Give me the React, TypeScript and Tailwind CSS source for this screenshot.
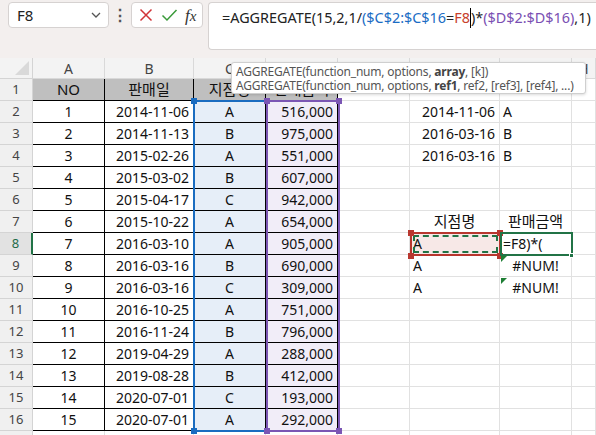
import React from "react";

const FONT = "font-['Noto_Sans','Noto_Sans_CJK_KR',sans-serif]";

const table = [
  ["1", "2014-11-06", "A", "516,000"],
  ["2", "2014-11-13", "B", "975,000"],
  ["3", "2015-02-26", "A", "551,000"],
  ["4", "2015-03-02", "B", "607,000"],
  ["5", "2015-04-17", "C", "942,000"],
  ["6", "2015-10-22", "A", "654,000"],
  ["7", "2016-03-10", "A", "905,000"],
  ["8", "2016-03-16", "B", "690,000"],
  ["9", "2016-03-16", "C", "309,000"],
  ["10", "2016-10-25", "A", "751,000"],
  ["11", "2016-11-24", "B", "796,000"],
  ["12", "2019-04-29", "A", "288,000"],
  ["13", "2019-08-28", "B", "412,000"],
  ["14", "2020-07-01", "C", "193,000"],
  ["15", "2020-07-01", "A", "292,000"],
];

// F / G column content by row number
const side: Record<number, [string, string, "rl" | "cc" | "ll" | "lc"]> = {
  2: ["2014-11-06", "A", "rl"],
  3: ["2016-03-16", "B", "rl"],
  4: ["2016-03-16", "B", "rl"],
  7: ["지점명", "판매금액", "cc"],
  8: ["A", "=F8)*(", "ll"],
  9: ["A", "#NUM!", "lc"],
  10: ["A", "#NUM!", "lc"],
};

const colLetters = ["A", "B", "C", "D", "E", "F", "G", "H"];

function Cell({
  children,
  align = "left",
  className = "",
}: {
  children?: React.ReactNode;
  align?: "left" | "center" | "right";
  className?: string;
}) {
  const a =
    align === "center" ? "justify-center" : align === "right" ? "justify-end pr-[4px]" : "justify-start pl-[3px]";
  return (
    <div className={`h-[22px] flex items-center overflow-hidden whitespace-nowrap border-r border-b text-[14px] text-[#111] leading-none ${a} ${className}`}>
      {children}
    </div>
  );
}

function Handle({ className }: { className: string }) {
  return <div className={`absolute w-[6px] h-[6px] ${className}`} />;
}

function TopBar() {
  return (
    <div className="h-[58px] bg-[#f3efee] flex items-start pt-[2px] pl-[8px]">
      <div className="shrink-0 w-[101px] h-[26px] bg-white border border-[#d6d2d1] rounded-[4px] flex items-center pl-[8px] pr-[6px] justify-between">
        <span className="text-[15px] text-[#222]">F8</span>
        <svg width="12" height="12" viewBox="0 0 12 12">
          <path d="M2 4 L6 8 L10 4" fill="none" stroke="#555" strokeWidth="1.3" />
        </svg>
      </div>
      <div className="shrink-0 w-[22px] h-[26px] flex items-center justify-center text-[#555] text-[16px] font-bold">⋮</div>
      <div className="shrink-0 w-[72px] h-[26px] bg-white border border-[#d6d2d1] rounded-[4px] flex items-center justify-around px-[2px]">
        <svg width="16" height="16" viewBox="0 0 16 16">
          <path d="M2.5 2.5 L13.5 13.5 M13.5 2.5 L2.5 13.5" stroke="#d13438" strokeWidth="1.5" />
        </svg>
        <svg width="17" height="16" viewBox="0 0 17 16">
          <path d="M1.5 8.5 L6 13 L15.5 3" fill="none" stroke="#3a9a3a" strokeWidth="1.5" />
        </svg>
        <span className="font-['Liberation_Serif',serif] italic text-[17px] text-[#333] leading-none">
          f<span className="text-[15px]">x</span>
        </span>
      </div>
      <div className="ml-[5px] min-w-0 flex-1 h-[48px] bg-white border border-r-0 border-[#d6d2d1] rounded-l-[4px] pl-[13px] pt-[4px] text-[14.4px] text-[#222] whitespace-nowrap overflow-hidden">
        =AGGREGATE(15,2,1/<span className="text-[#1a6cc4]">($C$2:$C$16</span>=<span className="text-[#c8402c]">F8</span>
        <span className="inline-block w-[1px] h-[20px] bg-black align-middle -mt-[2px]" />)*
        <span className="text-[#7a4fb3]">($D$2:$D$16)</span>,1)
      </div>
    </div>
  );
}

function Sheet() {
  const rows: React.ReactNode[] = [];
  // column header row
  rows.push(
    <div key="corner" className="h-[21px] bg-[#f3f3f3] border-r border-b border-[#d4d4d4] flex items-end justify-end p-[3px]">
      <svg width="14" height="14" viewBox="0 0 14 14">
        <polygon points="14,0 14,14 0,14" fill="#d9d9d9" />
      </svg>
    </div>
  );
  colLetters.forEach((c) =>
    rows.push(
      <div key={"h" + c} className="h-[21px] bg-[#f3f3f3] border-r border-b border-[#d9d9d9] flex items-center justify-center text-[14px] text-[#444]">
        {c}
      </div>
    )
  );

  for (let r = 1; r <= 17; r++) {
    const active = r === 8;
    rows.push(
      <div
        key={"r" + r}
        className={`h-[22px] flex items-center justify-center text-[13px] border-b border-[#d4d4d4] ${
          active ? "bg-[#e2e2e2] text-[#1e6b4a] border-r-2 border-r-[#217346]" : "bg-[#f0f0f0] text-[#444] border-r"
        }`}
      >
        {r <= 16 ? r : ""}
      </div>
    );
    // A-D
    if (r === 1) {
      ["NO", "판매일", "지점명", "판매금액"].forEach((t, i) =>
        rows.push(
          <Cell key={"t1" + i} align="center" className="bg-[#bfbfbf] border-black text-[15px]">
            {t}
          </Cell>
        )
      );
    } else if (r <= 16) {
      const d = table[r - 2];
      rows.push(<Cell key={"a" + r} align="center" className="border-black">{d[0]}</Cell>);
      rows.push(<Cell key={"b" + r} align="right" className="border-black">{d[1]}</Cell>);
      rows.push(<Cell key={"c" + r} align="center" className="border-black bg-[#e6eef8]">{d[2]}</Cell>);
      rows.push(<Cell key={"d" + r} align="right" className="border-black bg-[#f1edf8]">{d[3]}</Cell>);
    } else {
      for (let i = 0; i < 4; i++) rows.push(<Cell key={"x" + r + i} className="border-[#e1e1e1]" />);
    }
    // E
    rows.push(<Cell key={"e" + r} className="border-[#e1e1e1]" />);
    // F, G
    const s = side[r];
    if (s) {
      const [f, g, mode] = s;
      const fa = mode[0] === "r" ? "right" : mode[0] === "c" ? "center" : "left";
      const ga = mode[1] === "c" ? "center" : "left";
      rows.push(
        <Cell key={"f" + r} align={fa} className={`border-[#e1e1e1] ${r === 8 ? "bg-[#f7e8e7]" : ""} ${r === 7 ? "text-[15px]" : ""}`}>
          {f}
        </Cell>
      );
      rows.push(
        <Cell key={"g" + r} align={ga} className={`border-[#e1e1e1] ${r === 7 ? "text-[15px]" : ""}`}>
          {g}
        </Cell>
      );
    } else {
      rows.push(<Cell key={"f" + r} className="border-[#e1e1e1]" />);
      rows.push(<Cell key={"g" + r} className="border-[#e1e1e1]" />);
    }
    rows.push(<Cell key={"h" + r} className="border-[#e1e1e1]" />);
  }

  return (
    <div className="relative grid grid-cols-[33px_72px_89px_72px_72px_72px_90px_72px_1fr]">
      {rows}
      {/* range C2:C16 */}
      <div className="absolute left-[193px] top-[42px] w-[75px] h-[332px] border-2 border-[#1a6cc0]" />
      <Handle className="left-[191px] top-[40px] bg-[#1a6cc0]" />
      <Handle className="left-[191px] top-[370px] bg-[#1a6cc0]" />
      {/* range D2:D16 */}
      <div className="absolute left-[266px] top-[42px] w-[74px] h-[332px] border-2 border-[#7b56b4]" />
      <Handle className="left-[264px] top-[40px] bg-[#7b56b4]" />
      <Handle className="left-[336px] top-[40px] bg-[#7b56b4]" />
      <Handle className="left-[264px] top-[370px] bg-[#7b56b4]" />
      <Handle className="left-[336px] top-[370px] bg-[#7b56b4]" />
      {/* F8 reference */}
      <div className="absolute left-[410px] top-[174px] w-[91px] h-[24px] border-2 border-[#b8372f]" />
      <div className="absolute left-[413px] top-[177px] w-[85px] h-[18px] border-2 border-dashed border-[#217346]" />
      <Handle className="left-[408px] top-[172px] bg-[#b8372f]" />
      <Handle className="left-[497px] top-[172px] bg-[#b8372f]" />
      <Handle className="left-[408px] top-[195px] bg-[#b8372f]" />
      <Handle className="left-[497px] top-[195px] bg-[#b8372f]" />
      {/* error triangles */}
      <svg className="absolute left-[501px] top-[198px]" width="6" height="6" viewBox="0 0 6 6">
        <polygon points="0,0 6,0 0,6" fill="#1e7e34" />
      </svg>
      <svg className="absolute left-[501px] top-[220px]" width="6" height="6" viewBox="0 0 6 6">
        <polygon points="0,0 6,0 0,6" fill="#1e7e34" />
      </svg>
      {/* active cell G8 */}
      <div className="absolute left-[500px] top-[174px] w-[73px] h-[24px] border-2 border-[#217346]" />
      <div className="absolute left-[569px] top-[195px] w-[5px] h-[5px] bg-[#217346] border border-white" />
    </div>
  );
}

export default function App() {
  return (
    <div className={`relative w-[596px] h-[435px] overflow-hidden bg-white ${FONT}`}>
      <TopBar />
      <Sheet />
      {/* function tooltip */}
      <div className="absolute left-[231px] top-[62px] w-[355px] h-[32px] bg-white border border-[#cfcfcf] rounded-[3px] shadow-[0_1px_3px_rgba(0,0,0,0.15)] pl-[4px] pt-[2px] text-[12px] leading-[14px] text-[#555] whitespace-nowrap tracking-[-0.2px]">
        <div>
          AGGREGATE(function_num, options, <b className="text-[#444]">array</b>, [k])
        </div>
        <div>
          AGGREGATE(function_num, options, <b className="text-[#444]">ref1</b>, ref2, [ref3], [ref4], ...)
        </div>
      </div>
    </div>
  );
}
